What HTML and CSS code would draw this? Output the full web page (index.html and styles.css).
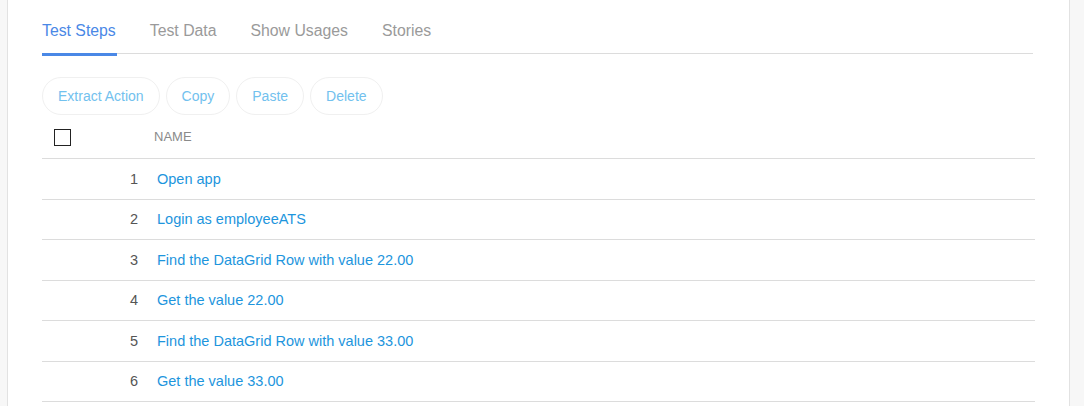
FILE: index.html
```html
<!DOCTYPE html>
<html>
<head>
<meta charset="utf-8">
<link rel="stylesheet" href="styles.css">
</head>
<body>
<div class="panel">
  <nav class="tabs">
    <span class="tab active">Test Steps</span>
    <span class="tab">Test Data</span>
    <span class="tab">Show Usages</span>
    <span class="tab">Stories</span>
  </nav>
  <div class="toolbar">
    <button class="btn">Extract Action</button>
    <button class="btn">Copy</button>
    <button class="btn">Paste</button>
    <button class="btn">Delete</button>
  </div>
  <div class="table">
    <div class="head">
      <div class="check-cell"><span class="checkbox"></span></div>
      <div class="head-name">NAME</div>
    </div>
    <div class="row"><div class="num">1</div><div class="name">Open app</div></div>
    <div class="row"><div class="num">2</div><div class="name">Login as employeeATS</div></div>
    <div class="row"><div class="num">3</div><div class="name">Find the DataGrid Row with value 22.00</div></div>
    <div class="row"><div class="num">4</div><div class="name">Get the value 22.00</div></div>
    <div class="row"><div class="num">5</div><div class="name">Find the DataGrid Row with value 33.00</div></div>
    <div class="row"><div class="num">6</div><div class="name">Get the value 33.00</div></div>
  </div>
</div>
</body>
</html>
```
FILE: styles.css
```css
html, body {
  margin: 0;
  padding: 0;
  height: 100%;
  overflow: hidden;
}
body {
  background: #f7f7f7;
  font-family: "Liberation Sans", Arial, sans-serif;
}
.panel {
  margin-left: 7px;
  width: 993px;
  min-height: 406px;
  background: #fff;
  border-left: 1px solid #e2e2e2;
  border-right: 1px solid #e2e2e2;
  padding: 0 34px;
}
.tabs {
  display: flex;
  gap: 34px;
  border-bottom: 1px solid #dcdcdc;
  margin-right: 2px;
  height: 53px;
}
.tab {
  position: relative;
  font-size: 15.8px;
  line-height: 20px;
  padding-top: 21px;
  color: #9a9a9a;
}
.tab.active {
  color: #4a88e6;
}
.tab.active::after {
  content: "";
  position: absolute;
  left: 0;
  right: -1px;
  bottom: -3px;
  height: 3px;
  background: #4a88e6;
}
.toolbar {
  display: flex;
  gap: 6px;
  margin-top: 23px;
}
.btn {
  height: 38px;
  padding: 0 15px;
  border: 1px solid #f0f0f0;
  border-radius: 19px;
  background: #fff;
  color: #72c1ee;
  font-family: "Liberation Sans", Arial, sans-serif;
  font-size: 14px;
}
.head {
  display: flex;
  align-items: center;
  height: 43px;
  border-bottom: 1px solid #dcdcdc;
}
.check-cell {
  width: 100px;
  padding-left: 12px;
  display: flex;
  align-items: center;
}
.checkbox {
  width: 15px;
  height: 15px;
  border: 1.5px solid #222;
  display: block;
  margin-top: 1px;
}
.head-name {
  font-size: 13px;
  color: #8a8a8a;
  margin-top: -1px;
}
.row {
  display: flex;
  align-items: center;
  height: 39.5px;
  border-bottom: 1px solid #dcdcdc;
  font-size: 14.5px;
}
.num {
  width: 96px;
  text-align: right;
  color: #555;
}
.name {
  margin-left: 19px;
  color: #1d95dd;
}
```
